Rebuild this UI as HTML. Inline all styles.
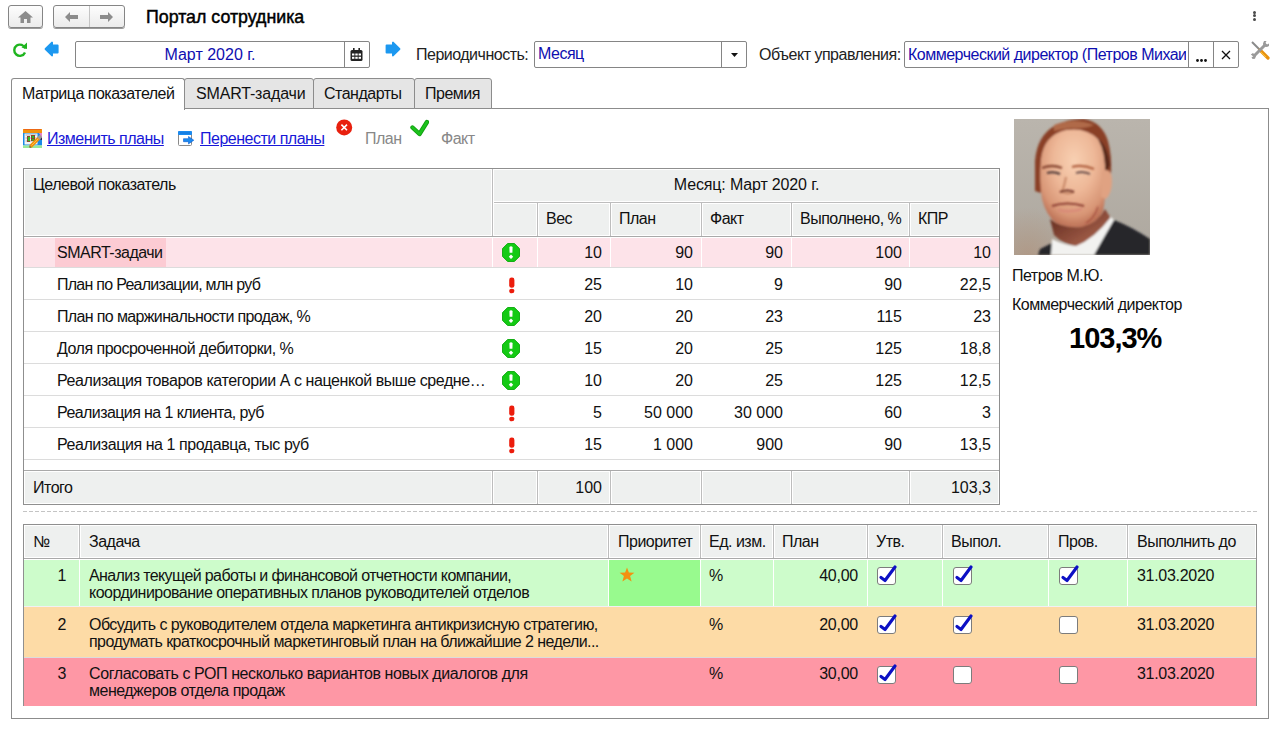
<!DOCTYPE html>
<html><head><meta charset="utf-8">
<style>
*{box-sizing:border-box;margin:0;padding:0}
html,body{width:1280px;height:731px;overflow:hidden;background:#fff;font-family:"Liberation Sans",sans-serif;font-size:15px;color:#111}
.a{position:absolute}
.btn{position:absolute;border:1px solid #858585;border-radius:3px;background:linear-gradient(#fdfdfd,#ebebeb);box-shadow:0 1px 0 #9a9a9a}
.t{position:absolute;white-space:nowrap;line-height:18px;font-size:16px;letter-spacing:-0.5px;margin-top:1px}
.nt{margin-top:0;letter-spacing:0}
.fld{position:absolute;border:1px solid #858585;border-radius:2px;background:#fff}
.tab{position:absolute;top:78px;height:31px;border:1px solid #8c8c8c;border-bottom:none;border-radius:3px 3px 0 0;background:#e5e5e5;text-align:center;line-height:28px}
.grid{position:absolute;border:1px solid #a8a8a8}
.hl{position:absolute;height:1px;background:#dcdcdc}
.vl{position:absolute;width:1px;background:#dcdcdc}
.r{text-align:right}
.lnk{color:#1818d8;text-decoration:underline}
</style></head><body>

<!-- top bar -->
<div class="btn" style="left:8px;top:5px;width:35px;height:23px"></div>
<svg class="a" style="left:18px;top:11px" width="15" height="12" viewBox="0 0 15 12"><path d="M7.5 0 L15 6.5 L12.5 6.5 L12.5 12 L9 12 L9 8 L6 8 L6 12 L2.5 12 L2.5 6.5 L0 6.5 Z" fill="#8c8c8c"/></svg>
<div class="btn" style="left:53px;top:5px;width:72px;height:23px"></div>
<div class="a" style="left:89px;top:6px;width:1px;height:21px;background:#c4c4c4"></div>
<svg class="a" style="left:65px;top:12px" width="14" height="10" viewBox="0 0 14 10"><path d="M0 5 L5 0 L5 3 L13 3 L13 7 L5 7 L5 10 Z" fill="#8c8c8c"/></svg>
<svg class="a" style="left:99px;top:12px" width="14" height="10" viewBox="0 0 14 10"><path d="M14 5 L9 0 L9 3 L1 3 L1 7 L9 7 L9 10 Z" fill="#8c8c8c"/></svg>
<div class="t nt" style="left:146px;top:8px;font-size:17.8px;color:#000;-webkit-text-stroke:0.45px #000">Портал сотрудника</div>
<svg class="a" style="left:1252px;top:10px" width="5" height="12" viewBox="0 0 5 12"><circle cx="2.5" cy="2.6" r="1.5" fill="#4a4a4a"/><circle cx="2.5" cy="5.6" r="1.5" fill="#4a4a4a"/><circle cx="2.5" cy="9.6" r="1.5" fill="#4a4a4a"/></svg>

<!-- toolbar row -->
<svg class="a" style="left:12px;top:42px" width="16" height="16" viewBox="0 0 16 16"><path d="M13.2 6.5 A5.6 5.6 0 1 0 13 10.5" fill="none" stroke="#1fb51f" stroke-width="2.4"/><path d="M9.5 5.5 L15 0.5 L15 7 Z" fill="#1fb51f"/></svg>
<svg class="a" style="left:44px;top:41px" width="16" height="16" viewBox="0 0 16 16"><path d="M1.6 8 L8 1.6 L8 4.6 L13.6 4.6 L13.6 11.4 L8 11.4 L8 14.4 Z" fill="#1c98f0" stroke="#1c98f0" stroke-linejoin="round" stroke-width="2"/></svg>
<div class="fld" style="left:75px;top:41px;width:295px;height:27px"></div>
<div class="a" style="left:344px;top:42px;width:1px;height:25px;background:#858585"></div>
<div class="t nt" style="left:75px;top:46px;width:270px;text-align:center;color:#0e0eb0;font-size:16px;letter-spacing:0">Март 2020 г.</div>
<svg class="a" style="left:350px;top:48px" width="13" height="13" viewBox="0 0 13 13"><rect x="0.5" y="2" width="12" height="11" rx="1.5" fill="#222"/><rect x="3" y="0" width="1.6" height="3" fill="#222"/><rect x="8.4" y="0" width="1.6" height="3" fill="#222"/><g fill="#fff"><rect x="2" y="5.5" width="2.4" height="2"/><rect x="5.3" y="5.5" width="2.4" height="2"/><rect x="8.6" y="5.5" width="2.4" height="2"/><rect x="2" y="8.8" width="2.4" height="2"/><rect x="5.3" y="8.8" width="2.4" height="2"/><rect x="8.6" y="8.8" width="2.4" height="2"/></g></svg>
<svg class="a" style="left:385px;top:41px" width="16" height="16" viewBox="0 0 16 16"><path d="M14.4 8 L8 1.6 L8 4.6 L1.6 4.6 L1.6 11.4 L8 11.4 L8 14.4 Z" fill="#1c98f0" stroke="#1c98f0" stroke-linejoin="round" stroke-width="2"/></svg>
<div class="t" style="left:416px;top:45px;color:#222">Периодичность:</div>
<div class="fld" style="left:534px;top:41px;width:213px;height:27px"></div>
<div class="a" style="left:721px;top:42px;width:1px;height:25px;background:#858585"></div>
<div class="t" style="left:538px;top:44px;color:#0e0eb0">Месяц</div>
<svg class="a" style="left:731px;top:53px" width="7" height="4" viewBox="0 0 7 4"><path d="M0 0 L7 0 L3.5 4 Z" fill="#111"/></svg>
<div class="t" style="left:759px;top:45px;color:#222">Объект управления:</div>
<div class="fld" style="left:904px;top:41px;width:335px;height:27px"></div>
<div class="a" style="left:1188px;top:42px;width:1px;height:25px;background:#858585"></div>
<div class="a" style="left:1213px;top:42px;width:1px;height:25px;background:#858585"></div>
<div class="t" style="left:908px;top:45px;color:#0e0eb0;width:278px;overflow:hidden">Коммерческий директор (Петров Михаил</div>
<svg class="a" style="left:1195px;top:58px" width="13" height="5" viewBox="0 0 13 5"><circle cx="2.5" cy="2.5" r="1.4" fill="#111"/><circle cx="6.5" cy="2.5" r="1.4" fill="#111"/><circle cx="10.5" cy="2.5" r="1.4" fill="#111"/></svg>
<svg class="a" style="left:1221px;top:50px" width="10" height="10" viewBox="0 0 10 10"><path d="M1 1 L9 9 M9 1 L1 9" stroke="#111" stroke-width="1.3"/></svg>
<svg class="a" style="left:1250px;top:40px" width="20" height="20" viewBox="0 0 20 20">
<path d="M2 2 L10 10" stroke="#8a8a8a" stroke-width="2"/>
<path d="M10 10 L18 18" stroke="#e8900c" stroke-width="3.2" stroke-linecap="round"/>
<path d="M11 12 L16 17" stroke="#f8c030" stroke-width="1"/>
<path d="M3.5 16.5 L16 4" stroke="#9a9a9a" stroke-width="3"/>
<path d="M0.8 14.5 L3 13 L6 16 L5 18.8 L2.5 19 L1.5 17 L3.5 16.5 Z" fill="#9a9a9a"/>
<path d="M14 1 L16.5 1 L15.5 3 L17 4.5 L19 3.5 L19 6 L17 7 L13.5 6.5 L13 3.5 Z" fill="#9a9a9a"/>
</svg>

<!-- tabs -->
<div class="a" style="left:11px;top:108px;width:1258px;height:611px;border:1px solid #8c8c8c;background:#fff"></div>
<div class="tab" style="left:184px;width:130px;height:31px;border-bottom:1px solid #8c8c8c"></div>
<div class="tab" style="left:313px;width:102px;height:31px;border-bottom:1px solid #8c8c8c"></div>
<div class="tab" style="left:414px;width:78px;height:31px;border-bottom:1px solid #8c8c8c"></div>
<div class="tab" style="left:11px;width:174px;background:#fff;height:32px"></div>
<div class="t" style="left:22px;top:84px">Матрица показателей</div>
<div class="t" style="left:196px;top:84px;letter-spacing:-0.172px">SMART-задачи</div>
<div class="t" style="left:324px;top:84px">Стандарты</div>
<div class="t" style="left:425px;top:84px">Премия</div>
<!-- actions -->
<svg class="a" style="left:23px;top:129px" width="19" height="19" viewBox="0 0 19 19">
<rect x="0" y="3.5" width="19" height="13" fill="#1a8ae6"/>
<rect x="0" y="0" width="19" height="4" fill="#f2920c"/>
<rect x="1" y="0" width="17" height="1" fill="#e84c1c" opacity="0.6"/>
<rect x="1.5" y="4.5" width="13" height="11" fill="#f4f4f4"/>
<g fill="#b0b0b0"><rect x="2.5" y="5.5" width="11" height="1"/><rect x="2.5" y="8.5" width="11" height="1"/><rect x="2.5" y="11.5" width="11" height="1"/></g>
<rect x="4" y="7" width="3" height="6" fill="#8a4a2a"/><rect x="5" y="8" width="2" height="4" fill="#28c028"/>
<rect x="8" y="6" width="4" height="6" fill="#8a4a2a"/><rect x="9" y="7" width="2" height="2" fill="#28c028"/><rect x="9" y="10" width="2" height="1.5" fill="#28c028"/>
<rect x="0" y="16.5" width="19" height="2.5" fill="#98e898"/>
<path d="M7.5 17.5 L16.5 8.5" stroke="#f0900c" stroke-width="3.6"/>
<path d="M8.5 16.5 L15.5 9.5" stroke="#ffc040" stroke-width="1"/>
<path d="M15.5 9.5 L18.5 6.5" stroke="#9a9a9a" stroke-width="3.6"/>
<path d="M15.8 4 L19 4 L19 8 Z" fill="#e880c8"/>
<path d="M17.2 10.5 L19 8.5 L19 11 Z" fill="#301040"/>
<path d="M6.5 16.5 L8.5 18.5 L6.5 18.8 Z" fill="#704020"/>
</svg>
<div class="t lnk" style="left:47px;top:129px">Изменить планы</div>
<svg class="a" style="left:178px;top:130px" width="17" height="17" viewBox="0 0 17 17">
<rect x="0.5" y="1.5" width="13" height="14" rx="1" fill="#fff" stroke="#8a8a8a"/>
<rect x="0" y="1" width="14" height="4" rx="1" fill="#1a8af0"/>
<rect x="2" y="2.5" width="10" height="1" fill="#0a64c8" opacity="0.6"/>
<path d="M5.5 8.7 L10.5 8.7 L10.5 6.5 L15.8 10.2 L10.5 13.9 L10.5 11.7 L5.5 11.7 Z" fill="#1a8af0" stroke="#0a5ad0" stroke-width="0.6" stroke-linejoin="round"/>
</svg>
<div class="t lnk" style="left:200px;top:129px">Перенести планы</div>
<svg class="a" style="left:336px;top:119px" width="17" height="17" viewBox="0 0 17 17"><circle cx="8.2" cy="8.4" r="8" fill="#e8200e"/><path d="M5.4 5.6 L11 11.2 M11 5.6 L5.4 11.2" stroke="#fff" stroke-width="1.6"/></svg>
<div class="t" style="left:365px;top:129px;color:#888">План</div>
<svg class="a" style="left:410px;top:119px" width="19" height="18" viewBox="0 0 19 18"><path d="M2.5 8.5 L9.5 15 L17 3" fill="none" stroke="#109c10" stroke-width="4.4" stroke-linejoin="round" stroke-linecap="round"/><path d="M2.5 8.5 L9.5 15 L17 3" fill="none" stroke="#1cc21c" stroke-width="2.6" stroke-linejoin="round" stroke-linecap="round"/></svg>
<div class="t" style="left:441px;top:129px;color:#888">Факт</div>

<!-- main table -->
<div class="a" style="left:23px;top:168px;width:977px;height:337px;border:1px solid #8f8f8f;background:#fff"></div>
<div class="a" style="left:25px;top:170px;width:973px;height:65px;background:#eef0ef"></div>
<div class="a" style="left:24px;top:236px;width:975px;height:1px;background:#a9a9a9"></div>
<div class="a" style="left:493px;top:202px;width:505px;height:1px;background:#bdbdbd"></div>
<div class="a" style="left:493px;top:201px;width:505px;height:1px;background:#fff"></div>
<div class="a" style="left:493px;top:203px;width:505px;height:1px;background:#fff"></div>
<div class="a" style="left:491px;top:170px;width:3px;height:65px;background:#fff"></div>
<div class="a" style="left:492px;top:169px;width:1px;height:67px;background:#bdbdbd"></div>
<div class="a" style="left:536px;top:203px;width:3px;height:32px;background:#fff"></div>
<div class="a" style="left:537px;top:202px;width:1px;height:34px;background:#bdbdbd"></div>
<div class="a" style="left:609px;top:203px;width:3px;height:32px;background:#fff"></div>
<div class="a" style="left:610px;top:202px;width:1px;height:34px;background:#bdbdbd"></div>
<div class="a" style="left:700px;top:203px;width:3px;height:32px;background:#fff"></div>
<div class="a" style="left:701px;top:202px;width:1px;height:34px;background:#bdbdbd"></div>
<div class="a" style="left:790px;top:203px;width:3px;height:32px;background:#fff"></div>
<div class="a" style="left:791px;top:202px;width:1px;height:34px;background:#bdbdbd"></div>
<div class="a" style="left:908px;top:203px;width:3px;height:32px;background:#fff"></div>
<div class="a" style="left:909px;top:202px;width:1px;height:34px;background:#bdbdbd"></div>
<div class="t" style="left:33px;top:175px">Целевой показатель</div>
<div class="t" style="left:494px;top:175px;width:505px;text-align:center;letter-spacing:-0.15px">Месяц: Март 2020 г.</div>
<div class="t" style="left:546px;top:209px">Вес</div>
<div class="t" style="left:619px;top:209px">План</div>
<div class="t" style="left:710px;top:209px">Факт</div>
<div class="t" style="left:800px;top:209px">Выполнено, %</div>
<div class="t" style="left:918px;top:209px">КПР</div>
<div class="a" style="left:24px;top:238px;width:975px;height:29px;background:#fde3e9"></div>
<div class="a" style="left:55px;top:238px;width:111px;height:29px;background:#fccbd3"></div>
<div class="a" style="left:492px;top:238px;width:1px;height:29px;background:#fff"></div>
<div class="a" style="left:537px;top:238px;width:1px;height:29px;background:#fff"></div>
<div class="a" style="left:610px;top:238px;width:1px;height:29px;background:#fff"></div>
<div class="a" style="left:701px;top:238px;width:1px;height:29px;background:#fff"></div>
<div class="a" style="left:791px;top:238px;width:1px;height:29px;background:#fff"></div>
<div class="a" style="left:909px;top:238px;width:1px;height:29px;background:#fff"></div>
<div class="a" style="left:24px;top:267px;width:975px;height:1px;background:#dcdcdc"></div>
<div class="a" style="left:24px;top:299px;width:975px;height:1px;background:#dcdcdc"></div>
<div class="a" style="left:24px;top:331px;width:975px;height:1px;background:#dcdcdc"></div>
<div class="a" style="left:24px;top:363px;width:975px;height:1px;background:#dcdcdc"></div>
<div class="a" style="left:24px;top:395px;width:975px;height:1px;background:#dcdcdc"></div>
<div class="a" style="left:24px;top:427px;width:975px;height:1px;background:#dcdcdc"></div>
<div class="a" style="left:24px;top:459px;width:975px;height:1px;background:#dcdcdc"></div>
<div class="t" style="left:57px;top:243px">SMART-задачи</div>
<svg class="a" style="left:502px;top:243px" width="18" height="19" viewBox="0 0 18 19"><path d="M5.6 0.5 L12.4 0.5 L17.5 5.6 L17.5 13.4 L12.4 18.5 L5.6 18.5 L0.5 13.4 L0.5 5.6 Z" fill="#14ca14" stroke="#0aa80a" stroke-width="0.9"/><path d="M7.4 4 Q9 2.6 10.6 4 L10.4 9.8 L7.6 9.8 Z" fill="#fff"/><path d="M9 11.6 L11.2 13.8 L9 16 L6.8 13.8 Z" fill="#fff"/></svg>
<div class="t r" style="left:490px;top:243px;width:112px;letter-spacing:0">10</div>
<div class="t r" style="left:581px;top:243px;width:112px;letter-spacing:0">90</div>
<div class="t r" style="left:671px;top:243px;width:112px;letter-spacing:0">90</div>
<div class="t r" style="left:790px;top:243px;width:112px;letter-spacing:0">100</div>
<div class="t r" style="left:879px;top:243px;width:112px;letter-spacing:0">10</div>
<div class="t" style="left:57px;top:275px;letter-spacing:-0.731px">План по Реализации, млн руб</div>
<svg class="a" style="left:509px;top:277px" width="6" height="17" viewBox="0 0 6 17"><rect x="0.2" y="0.6" width="5.2" height="10.2" rx="2.4" fill="#ec1c0c"/><ellipse cx="2.8" cy="14" rx="2.6" ry="2.3" fill="#ec1c0c"/></svg>
<div class="t r" style="left:490px;top:275px;width:112px;letter-spacing:0">25</div>
<div class="t r" style="left:581px;top:275px;width:112px;letter-spacing:0">10</div>
<div class="t r" style="left:671px;top:275px;width:112px;letter-spacing:0">9</div>
<div class="t r" style="left:790px;top:275px;width:112px;letter-spacing:0">90</div>
<div class="t r" style="left:879px;top:275px;width:112px;letter-spacing:0">22,5</div>
<div class="t" style="left:57px;top:307px;letter-spacing:-0.641px">План по маржинальности продаж, %</div>
<svg class="a" style="left:502px;top:307px" width="18" height="19" viewBox="0 0 18 19"><path d="M5.6 0.5 L12.4 0.5 L17.5 5.6 L17.5 13.4 L12.4 18.5 L5.6 18.5 L0.5 13.4 L0.5 5.6 Z" fill="#14ca14" stroke="#0aa80a" stroke-width="0.9"/><path d="M7.4 4 Q9 2.6 10.6 4 L10.4 9.8 L7.6 9.8 Z" fill="#fff"/><path d="M9 11.6 L11.2 13.8 L9 16 L6.8 13.8 Z" fill="#fff"/></svg>
<div class="t r" style="left:490px;top:307px;width:112px;letter-spacing:0">20</div>
<div class="t r" style="left:581px;top:307px;width:112px;letter-spacing:0">20</div>
<div class="t r" style="left:671px;top:307px;width:112px;letter-spacing:0">23</div>
<div class="t r" style="left:790px;top:307px;width:112px;letter-spacing:0">115</div>
<div class="t r" style="left:879px;top:307px;width:112px;letter-spacing:0">23</div>
<div class="t" style="left:57px;top:339px;letter-spacing:-0.5px">Доля просроченной дебиторки, %</div>
<svg class="a" style="left:502px;top:339px" width="18" height="19" viewBox="0 0 18 19"><path d="M5.6 0.5 L12.4 0.5 L17.5 5.6 L17.5 13.4 L12.4 18.5 L5.6 18.5 L0.5 13.4 L0.5 5.6 Z" fill="#14ca14" stroke="#0aa80a" stroke-width="0.9"/><path d="M7.4 4 Q9 2.6 10.6 4 L10.4 9.8 L7.6 9.8 Z" fill="#fff"/><path d="M9 11.6 L11.2 13.8 L9 16 L6.8 13.8 Z" fill="#fff"/></svg>
<div class="t r" style="left:490px;top:339px;width:112px;letter-spacing:0">15</div>
<div class="t r" style="left:581px;top:339px;width:112px;letter-spacing:0">20</div>
<div class="t r" style="left:671px;top:339px;width:112px;letter-spacing:0">25</div>
<div class="t r" style="left:790px;top:339px;width:112px;letter-spacing:0">125</div>
<div class="t r" style="left:879px;top:339px;width:112px;letter-spacing:0">18,8</div>
<div class="t" style="left:57px;top:371px;letter-spacing:-0.425px">Реализация товаров категории А с наценкой выше средне…</div>
<svg class="a" style="left:502px;top:371px" width="18" height="19" viewBox="0 0 18 19"><path d="M5.6 0.5 L12.4 0.5 L17.5 5.6 L17.5 13.4 L12.4 18.5 L5.6 18.5 L0.5 13.4 L0.5 5.6 Z" fill="#14ca14" stroke="#0aa80a" stroke-width="0.9"/><path d="M7.4 4 Q9 2.6 10.6 4 L10.4 9.8 L7.6 9.8 Z" fill="#fff"/><path d="M9 11.6 L11.2 13.8 L9 16 L6.8 13.8 Z" fill="#fff"/></svg>
<div class="t r" style="left:490px;top:371px;width:112px;letter-spacing:0">10</div>
<div class="t r" style="left:581px;top:371px;width:112px;letter-spacing:0">20</div>
<div class="t r" style="left:671px;top:371px;width:112px;letter-spacing:0">25</div>
<div class="t r" style="left:790px;top:371px;width:112px;letter-spacing:0">125</div>
<div class="t r" style="left:879px;top:371px;width:112px;letter-spacing:0">12,5</div>
<div class="t" style="left:57px;top:403px;letter-spacing:-0.582px">Реализация на 1 клиента, руб</div>
<svg class="a" style="left:509px;top:405px" width="6" height="17" viewBox="0 0 6 17"><rect x="0.2" y="0.6" width="5.2" height="10.2" rx="2.4" fill="#ec1c0c"/><ellipse cx="2.8" cy="14" rx="2.6" ry="2.3" fill="#ec1c0c"/></svg>
<div class="t r" style="left:490px;top:403px;width:112px;letter-spacing:0">5</div>
<div class="t r" style="left:581px;top:403px;width:112px;letter-spacing:0">50 000</div>
<div class="t r" style="left:671px;top:403px;width:112px;letter-spacing:0">30 000</div>
<div class="t r" style="left:790px;top:403px;width:112px;letter-spacing:0">60</div>
<div class="t r" style="left:879px;top:403px;width:112px;letter-spacing:0">3</div>
<div class="t" style="left:57px;top:435px;letter-spacing:-0.438px">Реализация на 1 продавца, тыс руб</div>
<svg class="a" style="left:509px;top:437px" width="6" height="17" viewBox="0 0 6 17"><rect x="0.2" y="0.6" width="5.2" height="10.2" rx="2.4" fill="#ec1c0c"/><ellipse cx="2.8" cy="14" rx="2.6" ry="2.3" fill="#ec1c0c"/></svg>
<div class="t r" style="left:490px;top:435px;width:112px;letter-spacing:0">15</div>
<div class="t r" style="left:581px;top:435px;width:112px;letter-spacing:0">1 000</div>
<div class="t r" style="left:671px;top:435px;width:112px;letter-spacing:0">900</div>
<div class="t r" style="left:790px;top:435px;width:112px;letter-spacing:0">90</div>
<div class="t r" style="left:879px;top:435px;width:112px;letter-spacing:0">13,5</div>
<div class="a" style="left:24px;top:470px;width:975px;height:1px;background:#a9a9a9"></div>
<div class="a" style="left:25px;top:472px;width:973px;height:31px;background:#eef0ef"></div>
<div class="a" style="left:491px;top:472px;width:3px;height:31px;background:#fff"></div>
<div class="a" style="left:492px;top:471px;width:1px;height:33px;background:#bdbdbd"></div>
<div class="a" style="left:536px;top:472px;width:3px;height:31px;background:#fff"></div>
<div class="a" style="left:537px;top:471px;width:1px;height:33px;background:#bdbdbd"></div>
<div class="a" style="left:609px;top:472px;width:3px;height:31px;background:#fff"></div>
<div class="a" style="left:610px;top:471px;width:1px;height:33px;background:#bdbdbd"></div>
<div class="a" style="left:700px;top:472px;width:3px;height:31px;background:#fff"></div>
<div class="a" style="left:701px;top:471px;width:1px;height:33px;background:#bdbdbd"></div>
<div class="a" style="left:790px;top:472px;width:3px;height:31px;background:#fff"></div>
<div class="a" style="left:791px;top:471px;width:1px;height:33px;background:#bdbdbd"></div>
<div class="a" style="left:908px;top:472px;width:3px;height:31px;background:#fff"></div>
<div class="a" style="left:909px;top:471px;width:1px;height:33px;background:#bdbdbd"></div>
<div class="t" style="left:33px;top:478px">Итого</div>
<div class="t r" style="left:490px;top:478px;width:112px;letter-spacing:0">100</div>
<div class="t r" style="left:879px;top:478px;width:112px;letter-spacing:0">103,3</div>
<svg class="a" style="left:23px;top:511px" width="1234" height="1"><line x1="0" y1="0.5" x2="1234" y2="0.5" stroke="#c4c4c4" stroke-dasharray="4 2"/></svg>
<!-- photo -->
<svg class="a" style="left:1014px;top:119px" width="136" height="136" viewBox="0 0 136 136">
<defs>
<linearGradient id="bg" x1="0" y1="0" x2="0" y2="1"><stop offset="0" stop-color="#bab5ad"/><stop offset="1" stop-color="#aea89f"/></linearGradient>
<radialGradient id="bl3" cx="0.1" cy="1" r="0.35"><stop offset="0" stop-color="#b09078" stop-opacity="0.6"/><stop offset="1" stop-color="#b09078" stop-opacity="0"/></radialGradient>
<radialGradient id="face" cx="0.52" cy="0.32" r="0.7"><stop offset="0" stop-color="#f8d0b2"/><stop offset="0.45" stop-color="#eeb898"/><stop offset="0.8" stop-color="#d89676"/><stop offset="1" stop-color="#b86c52"/></radialGradient>
<linearGradient id="neck" x1="0" y1="0" x2="1" y2="1"><stop offset="0" stop-color="#5a2418"/><stop offset="1" stop-color="#b87058"/></linearGradient>
<filter id="bl" x="-10%" y="-10%" width="120%" height="120%"><feGaussianBlur stdDeviation="0.9"/></filter>
<filter id="bl2" x="-20%" y="-20%" width="140%" height="140%"><feGaussianBlur stdDeviation="0.8"/></filter>
</defs>
<rect width="136" height="136" fill="url(#bg)"/>
<rect width="136" height="136" fill="url(#bl3)"/>
<g filter="url(#bl)">
<path d="M21 72 L21 42 Q23 16 42 6 Q56 -1 70 0 Q88 3 94 22 Q98 36 97 56 L90 58 Q88 30 78 18 Q62 8 44 16 Q30 26 28 46 L27 74 Z" fill="#8a4028"/>
<path d="M40 6 Q60 -2 80 6 Q70 10 58 9 Q48 10 40 12 Z" fill="#b06a4a"/>
<path d="M82 18 Q94 26 96 46 L92 54 Q88 34 80 22 Z" fill="#5a2a1c"/>
<path d="M27 40 Q30 16 52 11 Q72 8 84 20 Q92 34 91 56 Q92 80 89 92 Q84 104 70 108 Q54 110 42 104 Q32 96 28 80 Q25 62 27 40 Z" fill="url(#face)"/>
<path d="M88 52 Q98 48 98 62 Q98 74 92 80 L87 78 Z" fill="#e0a282"/>
<path d="M36 100 Q48 110 68 108 Q84 104 91 90 L96 98 Q98 104 92 112 Q80 124 66 128 Q50 126 40 116 Z" fill="url(#neck)"/>
<path d="M24 136 L26 130 L38 124 L40 136 Z" fill="#26262a"/>
<path d="M37 136 L38 120 Q50 126 62 127 Q80 120 97 98 L101 102 Q92 120 82 136 Z" fill="#f2f2f0"/>
<path d="M80 136 Q90 118 100 101 Q118 108 136 120 L136 136 Z" fill="#26272c"/>
</g>
<g filter="url(#bl2)">
<path d="M28 49 Q38 45 48 49" stroke="#8a4a36" stroke-width="2.4" fill="none"/>
<path d="M58 48 Q68 45 80 50" stroke="#b06040" stroke-width="2.2" fill="none"/>
<path d="M33 54 Q40 52 46 55" stroke="#4a3434" stroke-width="2" fill="none"/>
<path d="M62 54 Q69 52 76 55" stroke="#5a4040" stroke-width="1.8" fill="none"/>
<path d="M52 58 Q50 68 48 73 Q53 76 60 73" stroke="#c88868" stroke-width="2" fill="none"/>
<path d="M46 73 Q53 70 60 73" stroke="#6a2a20" stroke-width="2.2" fill="none"/>
<path d="M38 87 Q53 82 70 87" stroke="#8a3c30" stroke-width="2" fill="none"/>
<path d="M44 91 Q56 94 68 90" stroke="#d88878" stroke-width="2.2" fill="none"/>
<path d="M84 88 Q80 100 72 104" stroke="#a04838" stroke-width="1.2" fill="none"/>
</g>
</svg>
<div class="t" style="left:1012px;top:266px">Петров М.Ю.</div>
<div class="t" style="left:1012px;top:295px">Коммерческий директор</div>
<div class="t nt" style="left:1069px;top:323px;font-size:29px;letter-spacing:-1px;font-weight:bold;line-height:30px;color:#000">103,3%</div>
<!-- lower table -->
<div class="a" style="left:23px;top:524px;width:1234px;height:182px;border:1px solid #8f8f8f;border-bottom:none;background:#fff"></div>
<div class="a" style="left:25px;top:526px;width:1230px;height:31px;background:#eef0ef"></div>
<div class="a" style="left:24px;top:558px;width:1232px;height:1px;background:#a9a9a9"></div>
<div class="a" style="left:78px;top:526px;width:3px;height:31px;background:#fff"></div>
<div class="a" style="left:79px;top:525px;width:1px;height:33px;background:#bdbdbd"></div>
<div class="a" style="left:607px;top:526px;width:3px;height:31px;background:#fff"></div>
<div class="a" style="left:608px;top:525px;width:1px;height:33px;background:#bdbdbd"></div>
<div class="a" style="left:699px;top:526px;width:3px;height:31px;background:#fff"></div>
<div class="a" style="left:700px;top:525px;width:1px;height:33px;background:#bdbdbd"></div>
<div class="a" style="left:772px;top:526px;width:3px;height:31px;background:#fff"></div>
<div class="a" style="left:773px;top:525px;width:1px;height:33px;background:#bdbdbd"></div>
<div class="a" style="left:866px;top:526px;width:3px;height:31px;background:#fff"></div>
<div class="a" style="left:867px;top:525px;width:1px;height:33px;background:#bdbdbd"></div>
<div class="a" style="left:941px;top:526px;width:3px;height:31px;background:#fff"></div>
<div class="a" style="left:942px;top:525px;width:1px;height:33px;background:#bdbdbd"></div>
<div class="a" style="left:1047px;top:526px;width:3px;height:31px;background:#fff"></div>
<div class="a" style="left:1048px;top:525px;width:1px;height:33px;background:#bdbdbd"></div>
<div class="a" style="left:1126px;top:526px;width:3px;height:31px;background:#fff"></div>
<div class="a" style="left:1127px;top:525px;width:1px;height:33px;background:#bdbdbd"></div>
<div class="t" style="left:33px;top:532px">№</div>
<div class="t" style="left:89px;top:532px">Задача</div>
<div class="t" style="left:618px;top:532px">Приоритет</div>
<div class="t" style="left:709px;top:532px">Ед. изм.</div>
<div class="t" style="left:782px;top:532px">План</div>
<div class="t" style="left:876px;top:532px">Утв.</div>
<div class="t" style="left:951px;top:532px">Выпол.</div>
<div class="t" style="left:1058px;top:532px">Пров.</div>
<div class="t" style="left:1137px;top:532px">Выполнить до</div>
<div class="a" style="left:24px;top:560px;width:1232px;height:46px;background:#cdfccb"></div>
<div class="a" style="left:609px;top:560px;width:91px;height:46px;background:#98fa8e"></div>
<div class="a" style="left:79px;top:560px;width:1px;height:46px;background:#fff"></div>
<div class="a" style="left:608px;top:560px;width:1px;height:46px;background:#fff"></div>
<div class="a" style="left:700px;top:560px;width:1px;height:46px;background:#fff"></div>
<div class="a" style="left:773px;top:560px;width:1px;height:46px;background:#fff"></div>
<div class="a" style="left:867px;top:560px;width:1px;height:46px;background:#fff"></div>
<div class="a" style="left:942px;top:560px;width:1px;height:46px;background:#fff"></div>
<div class="a" style="left:1048px;top:560px;width:1px;height:46px;background:#fff"></div>
<div class="a" style="left:1127px;top:560px;width:1px;height:46px;background:#fff"></div>
<div class="a" style="left:24px;top:606px;width:1232px;height:1px;background:#f2f0f4"></div>
<div class="a" style="left:24px;top:607px;width:1232px;height:50px;background:#fddba6"></div>
<div class="a" style="left:24px;top:657px;width:1232px;height:1px;background:#dcdcdc"></div>
<div class="a" style="left:24px;top:658px;width:1232px;height:48px;background:#fe97a5"></div>
<div class="t r" style="left:30px;top:566px;width:36px">1</div>
<div class="t" style="left:89px;top:566px;letter-spacing:-0.608px">Анализ текущей работы и финансовой отчетности компании,</div>
<div class="t" style="left:89px;top:583px;letter-spacing:-0.528px">координирование оперативных планов руководителей отделов</div>
<div class="t" style="left:709px;top:566px">%</div>
<div class="t r" style="left:741px;top:566px;width:117px;letter-spacing:-0.25px">40,00</div>
<div class="t" style="left:1137px;top:566px;letter-spacing:-0.3px">31.03.2020</div>
<svg class="a" style="left:877px;top:565px" width="21" height="20" viewBox="0 -2 21 20"><rect x="0.5" y="0.5" width="18" height="17" rx="2.5" fill="#fff" stroke="#7c7c7c"/><path d="M4 10.5 L8 13.5 L18 0" fill="none" stroke="#0c10c4" stroke-width="3.1" stroke-linecap="round" stroke-linejoin="round"/></svg>
<svg class="a" style="left:953px;top:565px" width="21" height="20" viewBox="0 -2 21 20"><rect x="0.5" y="0.5" width="18" height="17" rx="2.5" fill="#fff" stroke="#7c7c7c"/><path d="M4 10.5 L8 13.5 L18 0" fill="none" stroke="#0c10c4" stroke-width="3.1" stroke-linecap="round" stroke-linejoin="round"/></svg>
<svg class="a" style="left:1059px;top:565px" width="21" height="20" viewBox="0 -2 21 20"><rect x="0.5" y="0.5" width="18" height="17" rx="2.5" fill="#fff" stroke="#7c7c7c"/><path d="M4 10.5 L8 13.5 L18 0" fill="none" stroke="#0c10c4" stroke-width="3.1" stroke-linecap="round" stroke-linejoin="round"/></svg>
<div class="t r" style="left:30px;top:615px;width:36px">2</div>
<div class="t" style="left:89px;top:615px;letter-spacing:-0.545px">Обсудить с руководителем отдела маркетинга антикризисную стратегию,</div>
<div class="t" style="left:89px;top:632px;letter-spacing:-0.576px">продумать краткосрочный маркетинговый план на ближайшие 2 недели...</div>
<div class="t" style="left:709px;top:615px">%</div>
<div class="t r" style="left:741px;top:615px;width:117px;letter-spacing:-0.25px">20,00</div>
<div class="t" style="left:1137px;top:615px;letter-spacing:-0.3px">31.03.2020</div>
<svg class="a" style="left:877px;top:614px" width="21" height="20" viewBox="0 -2 21 20"><rect x="0.5" y="0.5" width="18" height="17" rx="2.5" fill="#fff" stroke="#7c7c7c"/><path d="M4 10.5 L8 13.5 L18 0" fill="none" stroke="#0c10c4" stroke-width="3.1" stroke-linecap="round" stroke-linejoin="round"/></svg>
<svg class="a" style="left:953px;top:614px" width="21" height="20" viewBox="0 -2 21 20"><rect x="0.5" y="0.5" width="18" height="17" rx="2.5" fill="#fff" stroke="#7c7c7c"/><path d="M4 10.5 L8 13.5 L18 0" fill="none" stroke="#0c10c4" stroke-width="3.1" stroke-linecap="round" stroke-linejoin="round"/></svg>
<svg class="a" style="left:1059px;top:614px" width="21" height="20" viewBox="0 -2 21 20"><rect x="0.5" y="0.5" width="18" height="17" rx="2.5" fill="#fff" stroke="#7c7c7c"/></svg>
<div class="t r" style="left:30px;top:664px;width:36px">3</div>
<div class="t" style="left:89px;top:664px;letter-spacing:-0.401px">Согласовать с РОП несколько вариантов новых диалогов для</div>
<div class="t" style="left:89px;top:681px">менеджеров отдела продаж</div>
<div class="t" style="left:709px;top:664px">%</div>
<div class="t r" style="left:741px;top:664px;width:117px;letter-spacing:-0.25px">30,00</div>
<div class="t" style="left:1137px;top:664px;letter-spacing:-0.3px">31.03.2020</div>
<svg class="a" style="left:877px;top:664px" width="21" height="20" viewBox="0 -2 21 20"><rect x="0.5" y="0.5" width="18" height="17" rx="2.5" fill="#fff" stroke="#7c7c7c"/><path d="M4 10.5 L8 13.5 L18 0" fill="none" stroke="#0c10c4" stroke-width="3.1" stroke-linecap="round" stroke-linejoin="round"/></svg>
<svg class="a" style="left:953px;top:664px" width="21" height="20" viewBox="0 -2 21 20"><rect x="0.5" y="0.5" width="18" height="17" rx="2.5" fill="#fff" stroke="#7c7c7c"/></svg>
<svg class="a" style="left:1059px;top:664px" width="21" height="20" viewBox="0 -2 21 20"><rect x="0.5" y="0.5" width="18" height="17" rx="2.5" fill="#fff" stroke="#7c7c7c"/></svg>
<svg class="a" style="left:619px;top:567px" width="16" height="15" viewBox="0 0 16 15"><path d="M8 0.6 L9.9 5.6 L15.4 5.8 L11.1 9.1 L12.6 14.4 L8 11.4 L3.4 14.4 L4.9 9.1 L0.6 5.8 L6.1 5.6 Z" fill="#f39110"/></svg>
</body></html>
